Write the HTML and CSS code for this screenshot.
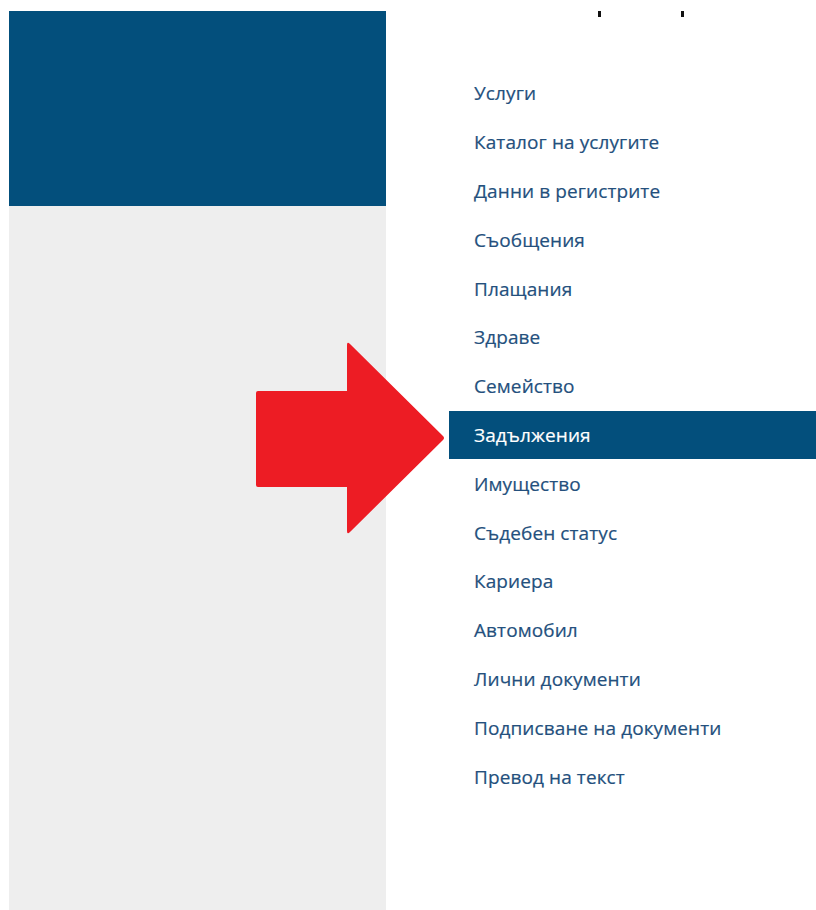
FILE: index.html
```html
<!DOCTYPE html>
<html lang="bg">
<head>
<meta charset="utf-8">
<title>Услуги</title>
<link rel="stylesheet" href="styles.css">
</head>
<body>
<div class="page">
  <aside class="side">
    <div class="side-top"></div>
    <div class="side-rest"></div>
  </aside>
  <main class="main">
    <div class="heading-cut"><span class="stem"></span><span class="stem second"></span></div>
    <nav class="menu">
      <a class="item" href="#">Услуги</a>
      <a class="item" href="#">Каталог на услугите</a>
      <a class="item" href="#">Данни в регистрите</a>
      <a class="item" href="#">Съобщения</a>
      <a class="item" href="#">Плащания</a>
      <a class="item" href="#">Здраве</a>
      <a class="item" href="#">Семейство</a>
      <a class="item active" href="#">Задължения</a>
      <a class="item" href="#">Имущество</a>
      <a class="item" href="#">Съдебен статус</a>
      <a class="item" href="#">Кариера</a>
      <a class="item" href="#">Автомобил</a>
      <a class="item" href="#">Лични документи</a>
      <a class="item" href="#">Подписване на документи</a>
      <a class="item" href="#">Превод на текст</a>
    </nav>
  </main>
  <svg class="pointer" width="192" height="196" viewBox="0 0 192 196" aria-hidden="true">
    <path d="M3 50 L92 50 L92 4 Q92 0 95 3 L188 95 Q190 97 188 99 L95 191 Q92 194 92 190 L92 146 L3 146 Q1 146 1 144 L1 52 Q1 50 3 50 Z" fill="#ed1c24"/>
  </svg>
</div>
</body>
</html>
```

FILE: styles.css
```css
* { box-sizing: border-box; }

html, body {
  margin: 0;
  padding: 0;
  background: #ffffff;
}

.page {
  position: relative;
  display: flex;
  width: 816px;
  height: 910px;
  overflow: hidden;
}

.side {
  display: flex;
  flex-direction: column;
  width: 377px;
  margin: 11px 0 0 9px;
  flex: none;
}

.side-top {
  height: 195px;
  background: #034f7c;
}

.side-rest {
  flex: 1;
  background: #eeeeee;
}

.main {
  flex: 1;
  margin-left: 63px;
  display: flex;
  flex-direction: column;
}

.heading-cut {
  position: relative;
  height: 69px;
}

.stem {
  position: absolute;
  top: 11px;
  left: 149px;
  width: 3px;
  height: 6px;
  background: #111111;
}

.stem.second {
  left: 232px;
}

.menu {
  display: flex;
  flex-direction: column;
}

.item {
  display: flex;
  align-items: center;
  height: 48.8px;
  padding-left: 25px;
  font-family: "Open Sans", "Noto Sans", sans-serif;
  font-size: 19px;
  letter-spacing: 0.1px;
  color: #24507d;
  text-decoration: none;
  -webkit-text-stroke: 0.2px currentColor;
}

.item.active {
  background: #034f7c;
  color: #ffffff;
}

.pointer {
  position: absolute;
  left: 255px;
  top: 341px;
}
```
